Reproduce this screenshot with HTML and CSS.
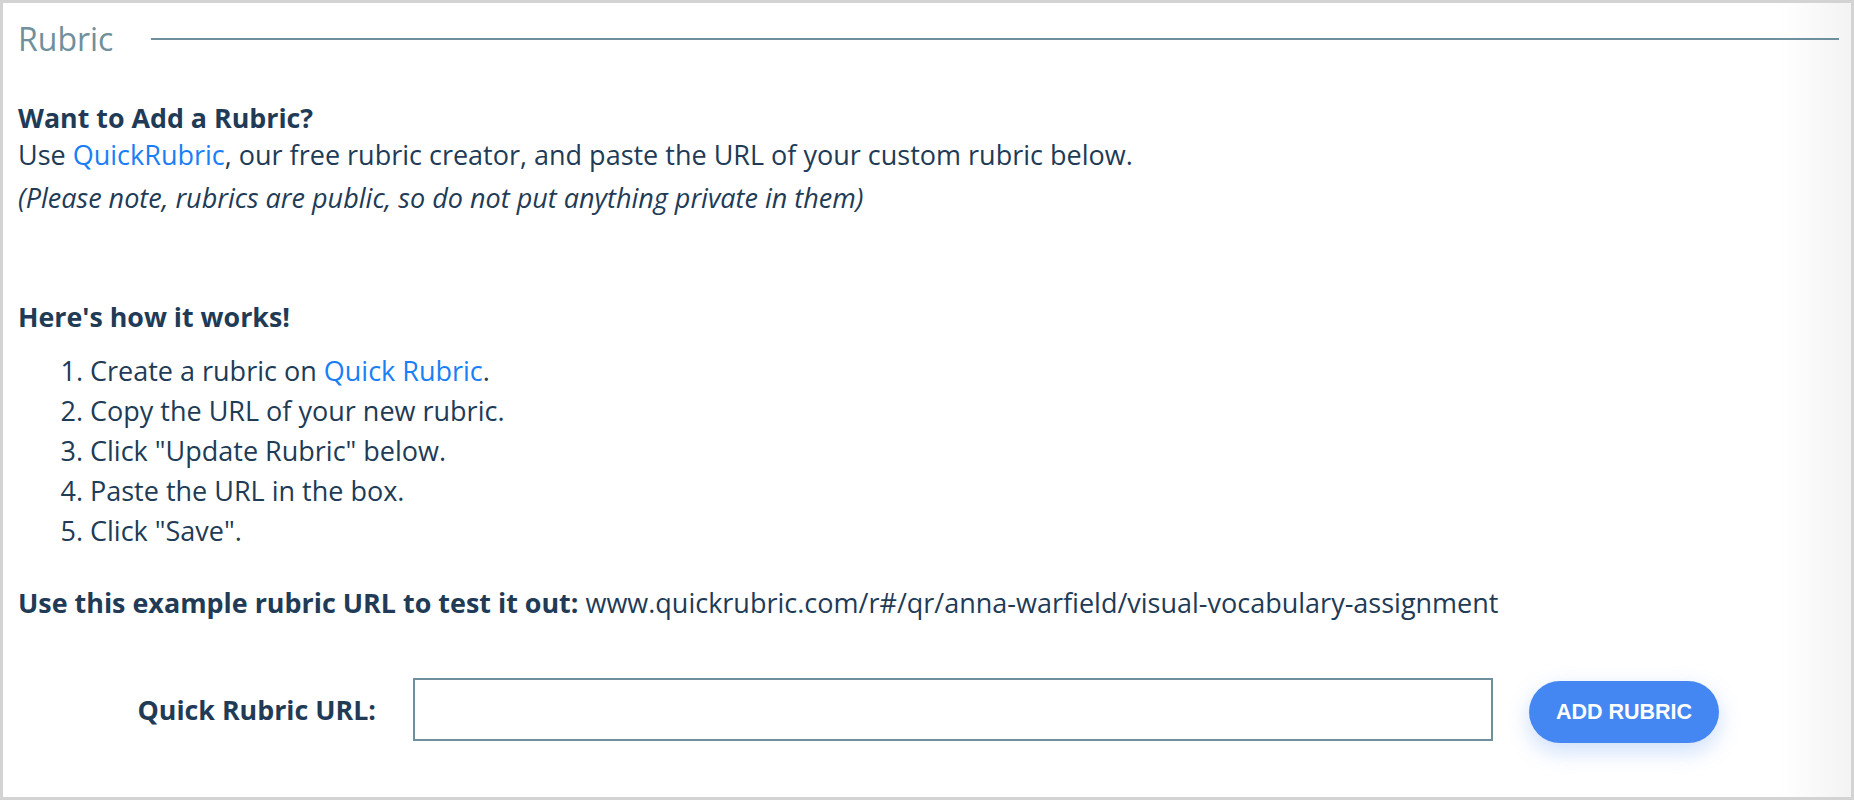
FILE: index.html
```html
<!DOCTYPE html>
<html lang="en">
<head>
<meta charset="utf-8">
<title>Rubric</title>
<link rel="stylesheet" href="styles.css">
</head>
<body>
<div class="frame">
  <div class="section-head">
    <h2 class="section-title">Rubric</h2>
    <div class="section-rule"></div>
  </div>

  <div class="intro">
    <h3 class="intro-title">Want to Add a Rubric?</h3>
    <p class="intro-text">Use <a href="#" class="link">QuickRubric</a>, our free rubric creator, and paste the URL of your custom rubric below.</p>
    <p class="intro-note">(Please note, rubrics are public, so do not put anything private in them)</p>
  </div>

  <div class="howto">
    <h3 class="howto-title">Here's how it works!</h3>
    <ol class="steps">
      <li>Create a rubric on <a href="#" class="link">Quick Rubric</a>.</li>
      <li>Copy the URL of your new rubric.</li>
      <li>Click "Update Rubric" below.</li>
      <li>Paste the URL in the box.</li>
      <li>Click "Save".</li>
    </ol>
    <p class="example"><strong>Use this example rubric URL to test it out:</strong> www.quickrubric.com/r#/qr/anna-warfield/visual-vocabulary-assignment</p>
  </div>

  <div class="form-row">
    <label class="form-label" for="rubric-url">Quick Rubric URL:</label>
    <input class="form-input" id="rubric-url" type="text">
    <button class="btn-add" type="button">ADD RUBRIC</button>
  </div>
</div>
</body>
</html>
```

FILE: styles.css
```css
html, body {
  margin: 0;
  padding: 0;
}

body {
  font-family: "Open Sans", "Noto Sans", sans-serif;
  color: #213b56;
  background: #ffffff;
}

.frame {
  box-sizing: border-box;
  height: 800px;
  border: 3px solid #d3d3d3;
  padding: 0 15px;
  background: linear-gradient(to right, #ffffff 0, #ffffff calc(100% - 70px), #f3f3f3 100%);
  overflow: hidden;
}

.section-head {
  display: flex;
  align-items: center;
  margin-top: 17px;
  margin-right: -3px;
}

.section-title {
  margin: 0;
  font-size: 32px;
  line-height: 38px;
  font-weight: 400;
  color: #6f909c;
}

.section-rule {
  flex: 1;
  height: 2px;
  margin-left: 38px;
  background: #6e8f9b;
}

.intro {
  margin-top: 43px;
}

.intro-title,
.howto-title {
  margin: 0;
  font-size: 26.8px;
  line-height: 33px;
  font-weight: 700;
}

.intro-text {
  margin: 4px 0 0;
  font-size: 27px;
  line-height: 33px;
}

.intro-note {
  margin: 7px 0 0;
  font-size: 27px;
  line-height: 40px;
  font-style: italic;
}

.link {
  color: #1a7ff6;
  text-decoration: none;
}

.howto {
  margin-top: 82px;
}

.steps {
  margin: 18px 0 0;
  padding-left: 72px;
  font-size: 27px;
  line-height: 40px;
}

.example {
  margin: 35px 0 0;
  font-size: 27px;
  line-height: 33px;
}

.example strong {
  font-weight: 700;
  font-size: 26.9px;
}

.form-row {
  display: flex;
  align-items: flex-start;
  margin-top: 59px;
}

.form-label {
  box-sizing: border-box;
  width: 358px;
  margin-top: 15px;
  text-align: right;
  font-size: 26.8px;
  line-height: 33px;
  font-weight: 700;
}

.form-input {
  box-sizing: border-box;
  width: 1080px;
  height: 63px;
  margin-left: 37px;
  border: 2px solid #6e8f9b;
  border-radius: 0;
  background: #ffffff;
  padding: 0 12px;
  font-family: "Open Sans", "Noto Sans", sans-serif;
  font-size: 24px;
  color: #213b56;
  outline: none;
}

.btn-add {
  box-sizing: border-box;
  width: 190px;
  height: 62px;
  margin-top: 3px;
  margin-left: 36px;
  border: 0;
  border-radius: 31px;
  background: #4587f2;
  color: #ffffff;
  font-family: "Liberation Sans", Arial, sans-serif;
  font-weight: 700;
  font-size: 21.5px;
  letter-spacing: 0;
  box-shadow: 0 8px 22px rgba(69, 135, 242, 0.28);
  cursor: pointer;
}
```
